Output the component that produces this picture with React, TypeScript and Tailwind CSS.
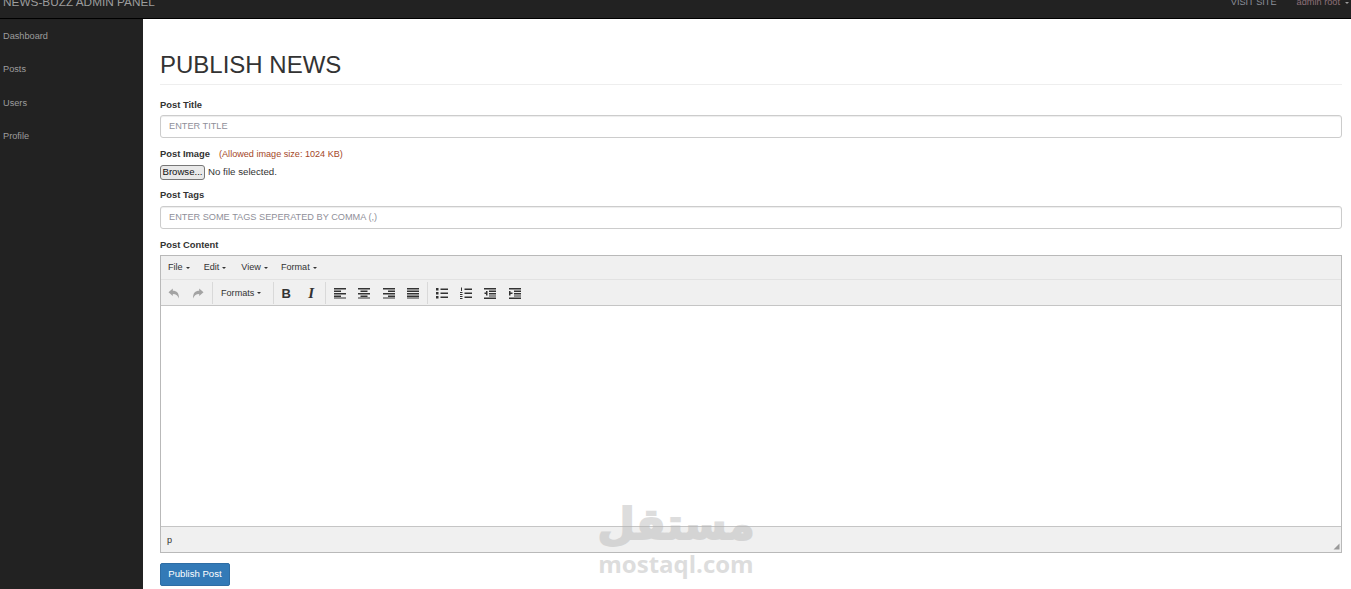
const sidebarLinks = ["Dashboard", "Posts", "Users", "Profile"];
const menus = ["File", "Edit", "View", "Format"];

function Caret({ color = "border-t-[#333]" }: { color?: string }) {
  return <span className={`inline-block w-0 h-0 border-x-[2px] border-x-transparent border-t-[2.5px] ${color}`} />;
}

function Lines({ rows }: { rows: number[][] }) {
  return (
    <svg width="12" height="12" viewBox="0 0 12 12" fill="#333">
      {rows.map(([x, y, w, h], i) => (
        <rect key={i} x={x} y={y} width={w} height={h} />
      ))}
    </svg>
  );
}

const icons: Record<string, number[][]> = {
  left: [[0, 1, 12, 1.5], [0, 3.5, 7, 1.5], [0, 6, 12, 1.5], [0, 8.5, 7, 1.5], [0, 10.5, 12, 1]],
  center: [[0, 1, 12, 1.5], [2.5, 3.5, 7, 1.5], [0, 6, 12, 1.5], [2.5, 8.5, 7, 1.5], [0, 10.5, 12, 1]],
  right: [[0, 1, 12, 1.5], [5, 3.5, 7, 1.5], [0, 6, 12, 1.5], [5, 8.5, 7, 1.5], [0, 10.5, 12, 1]],
  justify: [[0, 1, 12, 1.5], [0, 3.5, 12, 1.5], [0, 6, 12, 1.5], [0, 8.5, 12, 1.5], [0, 10.5, 12, 1]],
  bullets: [[0, 1, 2.5, 2.5], [4.5, 1.5, 7.5, 1.5], [0, 5, 2.5, 2.5], [4.5, 5.5, 7.5, 1.5], [0, 9, 2.5, 2.5], [4.5, 9.5, 7.5, 1.5]],
  numbers: [[1, 0.5, 1, 3.5], [0, 5, 2.5, 1], [0, 7, 2.5, 1], [0, 9, 2.5, 1], [0, 11, 2.5, 1], [4.5, 1.5, 7.5, 1.5], [4.5, 5.5, 7.5, 1.5], [4.5, 9.5, 7.5, 1.5]],
  outdent: [[0, 1, 12, 1.5], [5, 3.5, 7, 1.5], [5, 6, 7, 1.5], [5, 8.5, 7, 1], [0, 10.5, 12, 1.5], [0.5, 5.5, 2.5, 1.5], [2, 4, 1.5, 4.5]],
  indent: [[0, 1, 12, 1.5], [5, 3.5, 7, 1.5], [5, 6, 7, 1.5], [5, 8.5, 7, 1], [0, 10.5, 12, 1.5], [0, 4, 1.5, 4.5], [1, 5.5, 2.5, 1.5]],
};

function IconButton({ name }: { name: string }) {
  return (
    <span className="w-[24.4px] h-[24px] flex items-center justify-center">
      <Lines rows={icons[name]} />
    </span>
  );
}

function Separator() {
  return <span className="w-px h-[22px] bg-[#d9d9d9] mx-[1.5px]" />;
}

function ArrowButton({ flip }: { flip?: boolean }) {
  return (
    <span className="w-[24px] h-[24px] flex items-center justify-center">
      <svg width="12" height="11" viewBox="0 0 12 11" fill="#a3a3a3" className={flip ? "-scale-x-100" : ""}>
        <path d="M0.5 4.2 L4.8 0.5 V2.8 C8.8 2.8 11 5 11 10.5 C10 7.8 8.2 6 4.8 6 V8 Z" />
      </svg>
    </span>
  );
}

function Field({ placeholder }: { placeholder: string }) {
  return (
    <input
      readOnly
      placeholder={placeholder}
      className="block w-full h-[23px] px-[8px] pb-[2px] border border-[#ccc] rounded-[3px] bg-white text-[9.2px] text-[#555] placeholder:text-[#8f8f99] shadow-[inset_0_1px_1px_rgba(0,0,0,0.075)] outline-none"
    />
  );
}

function Label({ children }: { children: React.ReactNode }) {
  return <div className="text-[9.4px] leading-[14px] font-bold text-[#333]">{children}</div>;
}

export default function App() {
  return (
    <div className="h-[589px] overflow-hidden relative flex flex-col bg-[#222] font-['Liberation_Sans',Arial,sans-serif]">
      <nav className="h-[19px] shrink-0 bg-[#222] border-b border-black flex items-start justify-between">
        <div className="h-[5px] flex items-center pl-[3px] text-[11.8px] text-[#9d9d9d] whitespace-nowrap">
          NEWS-BUZZ ADMIN PANEL
        </div>
        <div className="h-[5px] flex items-center pr-[2px] text-[9.2px] whitespace-nowrap">
          <span className="text-[#8c8f99] mr-[20px]">VISIT SITE</span>
          <span className="text-[#8d7078] mr-[5px]">admin root</span>
          <Caret color="border-t-[#9d9d9d]" />
        </div>
      </nav>

      <div className="flex flex-1 min-h-0">
        <aside className="w-[143px] shrink-0 bg-[#222] pt-[1px]">
          {sidebarLinks.map((link) => (
            <a key={link} className="block h-[33.3px] pl-[3px] text-[9.2px] leading-[33.3px] text-[#9d9d9d]">
              {link}
            </a>
          ))}
        </aside>

        <main className="flex-1 bg-white pl-[17px] pr-[9px] pt-[32px]">
          <h1 className="h-[28px] pb-[5px] border-b border-[#eee] text-[24px] leading-[28px] font-normal text-[#333] box-content">
            PUBLISH NEWS
          </h1>

          <div className="mt-[13px]">
            <Label>Post Title</Label>
          </div>
          <div className="mt-[3px]">
            <Field placeholder="ENTER TITLE" />
          </div>

          <div className="mt-[9px] flex items-center">
            <Label>Post Image</Label>
            <span className="ml-[9px] text-[9.1px] leading-[14px] text-[#a4471f]">(Allowed image size: 1024 KB)</span>
          </div>
          <div className="mt-[4px] flex items-center h-[15px] text-[9.7px] text-[#333]">
            <button className="w-[45px] h-[15px] pb-[1px] border border-[#777] rounded-[3px] bg-[#e9e9e9] text-[9.6px] leading-none text-[#111]">
              Browse...
            </button>
            <span className="ml-[3px]">No file selected.</span>
          </div>

          <div className="mt-[8px]">
            <Label>Post Tags</Label>
          </div>
          <div className="mt-[4px]">
            <Field placeholder="ENTER SOME TAGS SEPERATED BY COMMA (,)" />
          </div>

          <div className="mt-[9px]">
            <Label>Post Content</Label>
          </div>

          <div className="mt-[3px] h-[298px] border border-[#b9b9b9] flex flex-col">
            <div className="h-[24px] shrink-0 bg-[#f0f0f0] border-b border-[#e2e2e2] flex items-center pt-[1px] text-[9.1px] text-[#333]">
              {menus.map((menu, i) => (
                <span
                  key={menu}
                  className={`flex items-center gap-[3px] ${i === 0 ? "ml-[7px]" : i === 1 ? "ml-[14px]" : i === 2 ? "ml-[15px]" : "ml-[13px]"}`}
                >
                  {menu}
                  <Caret />
                </span>
              ))}
            </div>

            <div className="h-[26px] shrink-0 bg-[#f0f0f0] border-b border-[#c5c5c5] flex items-center pl-[1px] pt-[1px] text-[9.1px] text-[#333]">
              <ArrowButton />
              <ArrowButton flip />
              <Separator />
              <span className="w-[57px] pt-[1px] flex items-center gap-[3px] pl-[7px]">
                Formats
                <Caret />
              </span>
              <Separator />
              <span className="w-[24.4px] pr-[2px] text-center text-[13px] leading-none font-bold text-[#333]">B</span>
              <span className="w-[24.4px] pr-[1px] text-center text-[15px] leading-none font-['Liberation_Serif',serif] italic font-bold text-[#333]">
                I
              </span>
              <Separator />
              <IconButton name="left" />
              <IconButton name="center" />
              <IconButton name="right" />
              <IconButton name="justify" />
              <Separator />
              <IconButton name="bullets" />
              <IconButton name="numbers" />
              <IconButton name="outdent" />
              <IconButton name="indent" />
            </div>

            <div className="flex-1 bg-white" />

            <div className="h-[26px] shrink-0 bg-[#f0f0f0] border-t border-[#c5c5c5] relative flex items-center pl-[6px] pt-[2px] text-[9.1px] text-[#333]">
              p
              <svg width="7" height="7" viewBox="0 0 7 7" fill="#999" className="absolute right-[1px] bottom-[2px]">
                <path d="M6.5 0.5 V6.5 H0.5 Z" />
              </svg>
            </div>
          </div>

          <button className="mt-[10px] w-[70px] h-[23px] bg-[#337ab7] border border-[#2e6da4] rounded-[2px] text-[9.6px] text-white">
            Publish Post
          </button>
        </main>
      </div>

      <div className="absolute left-[598px] top-[497px] w-[156px] h-[80px] flex flex-col items-center text-[#b4b4b4] opacity-45 pointer-events-none">
        <span dir="rtl" className="text-[43px] leading-[55px] font-bold font-['DejaVu_Sans',sans-serif] [-webkit-text-stroke:2px_#b4b4b4]">مستقل</span>
        <span className="text-[24px] leading-[24px] font-bold font-['Open_Sans',sans-serif]">mostaql.com</span>
      </div>
    </div>
  );
}
